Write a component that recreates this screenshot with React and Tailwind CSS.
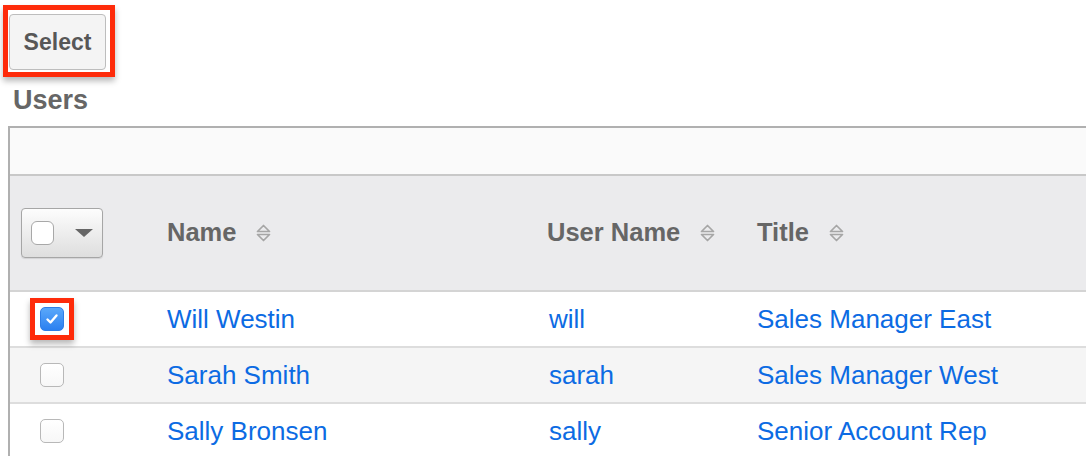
import React from 'react';

const users = [
  { name: 'Will Westin', user: 'will', title: 'Sales Manager East', checked: true },
  { name: 'Sarah Smith', user: 'sarah', title: 'Sales Manager West' },
  { name: 'Sally Bronsen', user: 'sally', title: 'Senior Account Rep' },
];

function SortIcon() {
  return (
    <svg width="15" height="20" viewBox="0 0 15 20" className="shrink-0">
      <path d="M1.5 8.5 L7.5 2.5 L13.5 8.5 Z" fill="none" stroke="#a6a6a6" strokeWidth="1.7" strokeLinejoin="round" />
      <path d="M1.5 11.5 L7.5 17.5 L13.5 11.5 Z" fill="none" stroke="#a6a6a6" strokeWidth="1.7" strokeLinejoin="round" />
    </svg>
  );
}

function Checkbox({ checked }) {
  if (checked) {
    return (
      <div className="flex h-[24px] w-[24px] items-center justify-center rounded-[5px] border border-[#2f7ee6] bg-gradient-to-b from-[#5aa8fa] to-[#2b80f0]">
        <svg width="16" height="16" viewBox="0 0 16 16">
          <path d="M3.5 8.5 L6.5 11.5 L12.5 4.5" fill="none" stroke="#fff" strokeWidth="2.4" strokeLinecap="round" strokeLinejoin="round" />
        </svg>
      </div>
    );
  }
  return (
    <div className="h-[24px] w-[24px] rounded-[5px] border border-[#b8b8b8] bg-gradient-to-b from-white to-[#f7f7f7]" />
  );
}

function HeaderCell({ children }) {
  return (
    <div className="flex items-center">
      <span className="text-[25.5px] font-bold leading-none text-[#666]">{children}</span>
      <span className="ml-[20px]">
        <SortIcon />
      </span>
    </div>
  );
}

export default function App() {
  return (
    <div
      className="relative h-[456px] w-[1086px] overflow-hidden bg-white"
      style={{ fontFamily: '"Liberation Sans", Arial, sans-serif' }}
    >
      <div className="pl-[3px] pt-[5px]">
        <div className="inline-flex border-[5px] border-[#fe2b0a] pb-[2px] pl-[1px] pr-[4px] pt-[4px] shadow-[0_4px_6px_rgba(0,0,0,0.28)]">
          <button className="h-[56px] w-[97px] rounded-[4px] border border-[#bdbdbd] bg-[#f4f4f4] text-[23px] font-bold text-[#575757]">
            Select
          </button>
        </div>
      </div>

      <h2 className="mt-[10px] pl-[13px] text-[27px] font-bold leading-[26px] text-[#666]">Users</h2>

      <div className="ml-[8px] mt-[13px] border-l-2 border-t-2 border-[#b0b0b0]">
        <div className="h-[48px] border-b-2 border-[#c8c8c8] bg-[#fafafa]" />

        <div className="grid h-[116px] grid-cols-[157px_380px_210px_1fr] border-b-2 border-[#d4d4d4] bg-[#ebebed]">
          <div className="flex items-center pl-[11px]">
            <div className="flex h-[50px] w-[82px] items-center rounded-[4px] border border-[#a6a6a6] bg-gradient-to-b from-[#fdfdfd] to-[#dedede] pl-[9px] shadow-[0_1px_1px_rgba(0,0,0,0.1)]">
              <div className="h-[24px] w-[23px] rounded-[6px] border border-[#a8a8a8] bg-white" />
              <svg width="18" height="8" viewBox="0 0 18 8" className="ml-[21px]">
                <polygon points="0,0 18,0 9,8" fill="#666" />
              </svg>
            </div>
          </div>
          <HeaderCell>Name</HeaderCell>
          <HeaderCell>User Name</HeaderCell>
          <HeaderCell>Title</HeaderCell>
        </div>

        {users.map((u, i) => (
          <div
            key={u.user}
            className={`grid h-[56px] grid-cols-[157px_380px_210px_1fr] items-center border-b-2 border-[#dddddd] text-[26px] leading-none text-[#0c6be3] ${
              i === 1 ? 'bg-[#f5f5f5]' : 'bg-white'
            }`}
          >
            <div className="flex items-center pl-[20px]">
              <div
                className={`border-[5px] px-[5px] py-[4px] ${
                  u.checked ? 'border-[#fe2b0a] shadow-[0_4px_6px_rgba(0,0,0,0.28)]' : 'border-transparent'
                }`}
              >
                <Checkbox checked={u.checked} />
              </div>
            </div>
            <div>{u.name}</div>
            <div className="pl-[2px]">{u.user}</div>
            <div className="whitespace-nowrap">{u.title}</div>
          </div>
        ))}
      </div>
    </div>
  );
}
